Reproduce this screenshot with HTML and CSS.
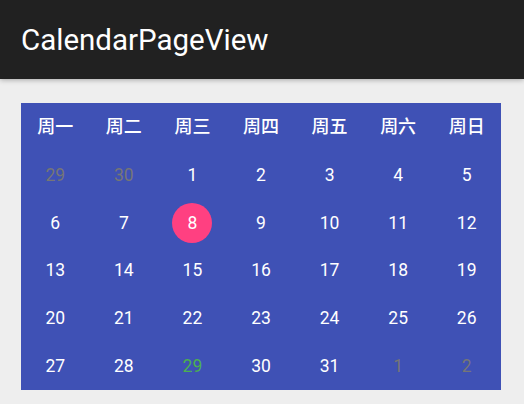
FILE: index.html
```html
<!DOCTYPE html>
<html lang="zh">
<head>
<meta charset="utf-8">
<title>CalendarPageView</title>
<link rel="stylesheet" href="styles.css">
</head>
<body>
<header class="toolbar"><h1 class="title">CalendarPageView</h1></header>
<main class="content">
  <div class="calendar">
    <div class="wk">周一</div><div class="wk">周二</div><div class="wk">周三</div><div class="wk">周四</div><div class="wk">周五</div><div class="wk">周六</div><div class="wk">周日</div>
    <div class="day other">29</div><div class="day other">30</div><div class="day">1</div><div class="day">2</div><div class="day">3</div><div class="day">4</div><div class="day">5</div>
    <div class="day">6</div><div class="day">7</div><div class="day"><span class="sel">8</span></div><div class="day">9</div><div class="day">10</div><div class="day">11</div><div class="day">12</div>
    <div class="day">13</div><div class="day">14</div><div class="day">15</div><div class="day">16</div><div class="day">17</div><div class="day">18</div><div class="day">19</div>
    <div class="day">20</div><div class="day">21</div><div class="day">22</div><div class="day">23</div><div class="day">24</div><div class="day">25</div><div class="day">26</div>
    <div class="day">27</div><div class="day">28</div><div class="day today">29</div><div class="day">30</div><div class="day">31</div><div class="day other">1</div><div class="day other">2</div>
  </div>
</main>
</body>
</html>
```
FILE: styles.css
```css
html, body { margin: 0; padding: 0; }
body {
  background: #eeeeee;
  font-family: Roboto, "Noto Sans CJK SC", sans-serif;
  width: 524px;
  height: 404px;
  overflow: hidden;
}
.toolbar {
  height: 79px;
  background: #212121;
  display: flex;
  align-items: center;
  padding-left: 21px;
  box-shadow: 0 1px 5px rgba(0,0,0,0.3);
  position: relative;
  z-index: 1;
}
.title {
  margin: 0;
  color: #ffffff;
  font-weight: 400;
  font-size: 29.5px;
}
.content {
  padding: 24px 23px 0 21px;
}
.calendar {
  width: 480px;
  height: 287px;
  background: #3f51b5;
  display: grid;
  grid-template-columns: repeat(7, 1fr);
  grid-template-rows: repeat(6, 1fr);
  color: #ffffff;
}
.wk {
  display: flex;
  align-items: center;
  justify-content: center;
  font-family: "Noto Sans CJK SC", sans-serif;
  font-weight: 500;
  font-size: 18px;
  padding-bottom: 3px;
}
.day {
  display: flex;
  align-items: center;
  justify-content: center;
  font-size: 17.5px;
}
.other { color: #767676; }
.today { color: #4caf50; }
.sel {
  width: 40px;
  height: 40px;
  border-radius: 50%;
  background: #ff4081;
  display: flex;
  align-items: center;
  justify-content: center;
}
```
